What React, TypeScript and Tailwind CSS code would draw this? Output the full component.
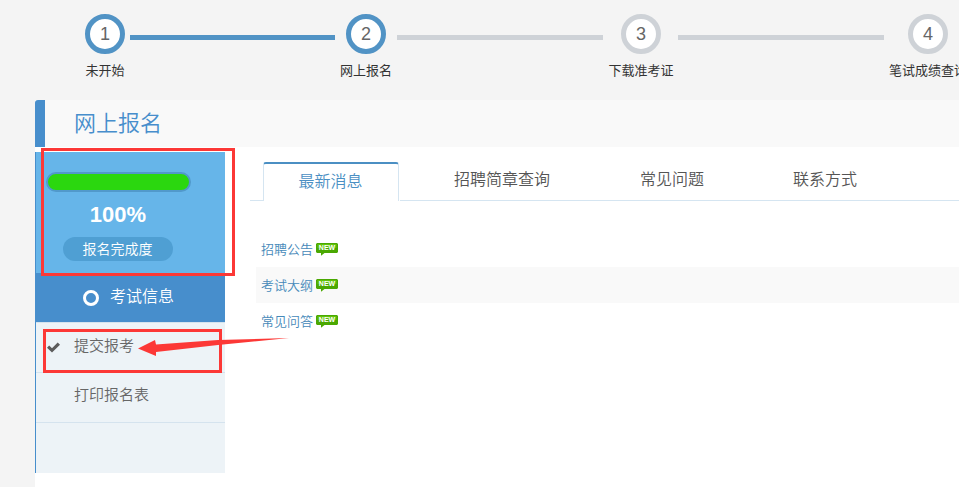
import React from 'react';

interface Step {
  label: string;
  done: boolean;
  cell: string;
  line?: string;
}

const steps: Step[] = [
  { label: '未开始', done: true, cell: 'ml-[85px]', line: 'ml-[5px] mr-[11px] w-[205px]' },
  { label: '网上报名', done: true, cell: '', line: 'ml-[11px] mr-[18px] w-[206px]' },
  { label: '下载准考证', done: false, cell: '', line: 'ml-[17px] mr-[24px] w-[206px]' },
  { label: '笔试成绩查询', done: false, cell: '' },
];

const tabs = [
  { label: '招聘简章查询', style: 'ml-[54px]' },
  { label: '常见问题', style: 'ml-[90px]' },
  { label: '联系方式', style: 'ml-[89px]' },
];

const news = ['招聘公告', '考试大纲', '常见问答'];

function StepBar() {
  return (
    <div className="flex h-[100px] pt-[14px]">
      {steps.map((step, i) => (
        <React.Fragment key={step.label}>
          <div className={`flex w-10 shrink-0 flex-col items-center ${step.cell}`}>
            <div
              className={`flex h-10 w-10 shrink-0 items-center justify-center rounded-full border-[5px] bg-white text-[18px] leading-none text-[#666] ${
                step.done ? 'border-[#5193c5]' : 'border-[#ced2d7]'
              }`}
            >
              {i + 1}
            </div>
            <div className="mt-[7px] whitespace-nowrap text-[13px] leading-5 text-[#333]">{step.label}</div>
          </div>
          {step.line && (
            <div className={`mt-[21px] h-[5px] shrink-0 ${step.line} ${step.done && i === 0 ? 'bg-[#5193c5]' : 'bg-[#ced2d7]'}`} />
          )}
        </React.Fragment>
      ))}
    </div>
  );
}

function NewBadge() {
  return (
    <span className="relative ml-[3px] flex h-[13px] w-[22px]">
      <svg className="absolute inset-0" width="22" height="13" viewBox="0 0 22 13">
        <path d="M1 0H21L22 1V9L21 10H8.5L5 12.8V10H1L0 9V1Z" fill="#4aa802" />
        <path d="M1.5 1H20.5V5H1.5Z" fill="#62c20a" />
      </svg>
      <span className="relative w-full text-center text-[7px] font-bold leading-[10px] text-white">NEW</span>
    </span>
  );
}

function Sidebar() {
  return (
    <aside className="mt-[5px] h-[321px] w-[190px] shrink-0 border-l border-[#478ecc] bg-[#edf3f7] font-[350]">
      <div className="flex h-[121px] flex-col bg-[#66b5e9] pt-5 text-white">
        <div className="ml-[10px] h-5 w-[145px] rounded-full border-2 border-[#5199cb] bg-[#2bd70f]" />
        <div className="ml-[10px] w-[144px] pt-2 text-center text-[22px] font-bold leading-[30px]">100%</div>
        <div className="ml-[27px] mt-[7px] h-6 w-[110px] rounded-full bg-[#4f9fd3] pr-px text-center text-[14px] leading-6">报名完成度</div>
      </div>
      <div className="flex h-[49px] items-center bg-[#478ecc] pl-[47px] text-[16px] text-white">
        <span className="mt-px h-4 w-4 rounded-full border-[3px] border-white" />
        <span className="-mt-px ml-[11px]">考试信息</span>
      </div>
      <div className="flex h-[50px] items-center border-t border-[#d5e3ee] pl-[11px] text-[15px] text-[#666]">
        <svg width="13" height="11" viewBox="0 0 13 11">
          <path d="M0 5.7L2.2 3.5L5 6.2L10.7 0.5L13 2.7L5 10.6Z" fill="#5c5c5c" />
        </svg>
        <span className="-mt-[2px] ml-[14px]">提交报考</span>
      </div>
      <div className="flex h-[50px] items-center border-t border-[#d5e3ee] pl-[38px] text-[15px] text-[#666]">
        <span className="-mt-[4px]">打印报名表</span>
      </div>
      <div className="border-t border-[#d5e3ee]" />
    </aside>
  );
}

function Content() {
  return (
    <section className="ml-[25px] flex-1 pt-[15px]">
      <div className="flex h-[39px] font-[350]">
        <div className="w-[13px] border-b border-[#d5e5f1]" />
        <div className="h-[39px] w-[136px] rounded-t-[3px] border-x border-t-2 border-x-[#d5e5f1] border-t-[#4b8fc3] pr-px text-center text-[16px] leading-[36px] text-[#4b8fc3]">
          最新消息
        </div>
        <div className="ml-px flex flex-1 border-b border-[#d5e5f1] text-[16px] leading-[36px] text-[#555]">
          {tabs.map(tab => (
            <span key={tab.label} className={`whitespace-nowrap ${tab.style}`}>{tab.label}</span>
          ))}
        </div>
      </div>
      <ul className="ml-[6px] mt-[30px] font-[350]">
        {news.map(item => (
          <li key={item} className="flex h-9 items-center pl-[5px] text-[13px] text-[#4689b9] even:bg-[#f9f9f9]">
            <span className="mt-px">{item}</span>
            <NewBadge />
          </li>
        ))}
      </ul>
    </section>
  );
}

export default function App() {
  return (
    <div className="relative h-[487px] w-[959px] overflow-hidden bg-[#f4f4f4] font-['Liberation_Sans','Noto_Sans_CJK_SC',sans-serif]">
      <StepBar />
      <main className="ml-[35px] h-[387px] bg-white">
        <h1 className="flex h-[47px] items-center rounded-tl-[3px] border-l-[10px] border-[#478ecc] bg-[#f9f9f9] pl-[29px] text-[22px] font-[350] text-[#478ecc]">
          网上报名
        </h1>
        <div className="flex">
          <Sidebar />
          <Content />
        </div>
      </main>

      {/* markers drawn over the page */}
      <div className="absolute left-[41px] top-[148px] h-[128px] w-[194px] border-[3px] border-[#fc3836]" />
      <div className="absolute left-[43px] top-[329px] h-[44px] w-[179px] border-[3px] border-[#fc3836]" />
      <svg className="absolute left-[138px] top-[336px]" width="152" height="22" viewBox="0 0 152 22">
        <path d="M0 12.5L17 4L18 8.5L80 4L151 2L80 9L18 16L18 20Z" fill="#fc3836" />
      </svg>
    </div>
  );
}
